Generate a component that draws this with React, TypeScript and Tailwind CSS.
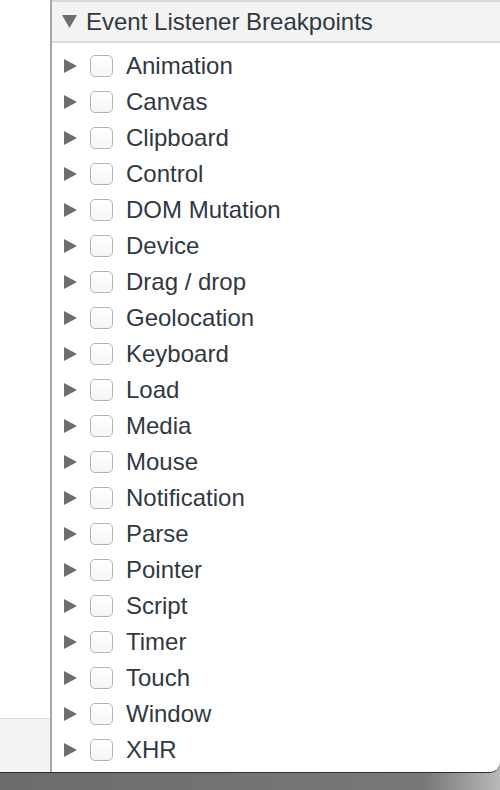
import React from "react";

const items = [
  "Animation",
  "Canvas",
  "Clipboard",
  "Control",
  "DOM Mutation",
  "Device",
  "Drag / drop",
  "Geolocation",
  "Keyboard",
  "Load",
  "Media",
  "Mouse",
  "Notification",
  "Parse",
  "Pointer",
  "Script",
  "Timer",
  "Touch",
  "Window",
  "XHR",
];

export default function App() {
  return (
    <div
      className="w-[500px] h-[790px] overflow-hidden bg-gradient-to-r from-[#6c6c6c] via-[#787878] via-85% to-[#b9b9b9]"
      style={{ fontFamily: '"Liberation Sans", Arial, sans-serif' }}
    >
      <div className="flex h-[773px] bg-white border-b border-[#2f2f2f] rounded-br-[10px] overflow-hidden">
        <div className="w-[50px] flex flex-col">
          <div className="flex-1 bg-white" />
          <div className="h-[54px] bg-[#f3f3f3] border-t border-[#dadada]" />
        </div>
        <div className="w-[2px] bg-[#a6a6a6]" />
        <div className="flex-1 flex flex-col border-t-2 border-[#d9d9d9]">
          <div className="h-[41px] bg-[#f3f3f3] border-b-2 border-[#dadada] flex items-center pl-[10px]">
            <svg width="15" height="13" viewBox="0 0 15 13" className="shrink-0">
              <polygon points="0,0 15,0 7.5,13" fill="#6e6e6e" />
            </svg>
            <span className="ml-[9px] text-[24px] leading-none text-[#303942]">
              Event Listener Breakpoints
            </span>
          </div>
          <div className="pt-[5px] flex flex-col">
            {items.map((label) => (
              <div key={label} className="h-[36px] flex items-center pl-[12px]">
                <svg width="13" height="14" viewBox="0 0 13 14" className="shrink-0">
                  <polygon points="0,0 13,7 0,14" fill="#6e6e6e" />
                </svg>
                <div className="ml-[13px] w-[23px] h-[22px] rounded-[5px] border border-[#b4b4b4] bg-gradient-to-b from-white to-[#f6f6f6] shrink-0" />
                <span className="ml-[13px] text-[24px] leading-none text-[#303942]">
                  {label}
                </span>
              </div>
            ))}
          </div>
        </div>
      </div>
    </div>
  );
}
